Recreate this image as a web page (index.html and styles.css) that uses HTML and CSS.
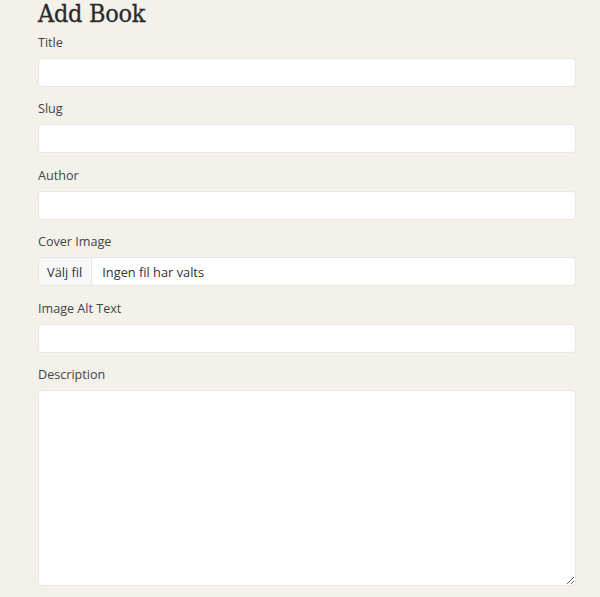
FILE: index.html
```html
<!DOCTYPE html>
<html lang="en">
<head>
<meta charset="utf-8">
<title>Add Book</title>
<link rel="stylesheet" href="styles.css">
</head>
<body>
<main class="page">
  <h1 class="heading">Add Book</h1>
  <form class="form">
    <div class="field">
      <label class="label" for="title">Title</label>
      <input class="control" id="title" type="text">
    </div>
    <div class="field">
      <label class="label" for="slug">Slug</label>
      <input class="control" id="slug" type="text">
    </div>
    <div class="field">
      <label class="label" for="author">Author</label>
      <input class="control" id="author" type="text">
    </div>
    <div class="field">
      <span class="label">Cover Image</span>
      <div class="control file">
        <span class="file-btn">Välj fil</span>
        <span class="file-name">Ingen fil har valts</span>
      </div>
    </div>
    <div class="field">
      <label class="label" for="alt">Image Alt Text</label>
      <input class="control" id="alt" type="text">
    </div>
    <div class="field">
      <label class="label" for="desc">Description</label>
      <textarea class="control area" id="desc"></textarea>
    </div>
  </form>
</main>
</body>
</html>
```

FILE: styles.css
```css
html, body {
  margin: 0;
  padding: 0;
  background: #f4f1eb;
}
body {
  font-family: "Open Sans", "Noto Sans", sans-serif;
  color: #3d3d3d;
}
.page {
  padding: 0 24px 0 38px;
  display: flex;
  flex-direction: column;
}
.heading {
  margin: 0 0 4px 0;
  font-family: "DejaVu Serif Condensed", "DejaVu Serif", serif;
  font-stretch: condensed;
  font-weight: 400;
  font-size: 25px;
  line-height: 28px;
  letter-spacing: -0.3px;
  color: #2a2a2a;
  -webkit-text-stroke: 0.3px #2a2a2a;
}
.form {
  display: flex;
  flex-direction: column;
}
.field {
  display: flex;
  flex-direction: column;
  margin-bottom: 11.4px;
}
.label {
  font-size: 12.6px;
  line-height: 20px;
  margin: 1px 0 5px 0;
  color: #444;
}
.control {
  box-sizing: border-box;
  width: 538px;
  height: 29px;
  margin: 0;
  border: 1px solid #e9e7e3;
  border-radius: 4px;
  background: #fff;
  font-family: inherit;
  font-size: 12.8px;
  color: #333;
  padding: 0 9px;
  outline: none;
}
.file {
  display: flex;
  align-items: stretch;
  padding: 0;
  overflow: hidden;
}
.file-btn {
  display: flex;
  align-items: center;
  padding: 0 9px 0 8px;
  background: #f8f8f8;
  border-right: 1px solid #e9e7e3;
  color: #333;
}
.file-name {
  display: flex;
  align-items: center;
  padding-left: 10px;
  color: #333;
}
.area {
  height: 196px;
  padding: 6px 9px;
  resize: vertical;
}
```
